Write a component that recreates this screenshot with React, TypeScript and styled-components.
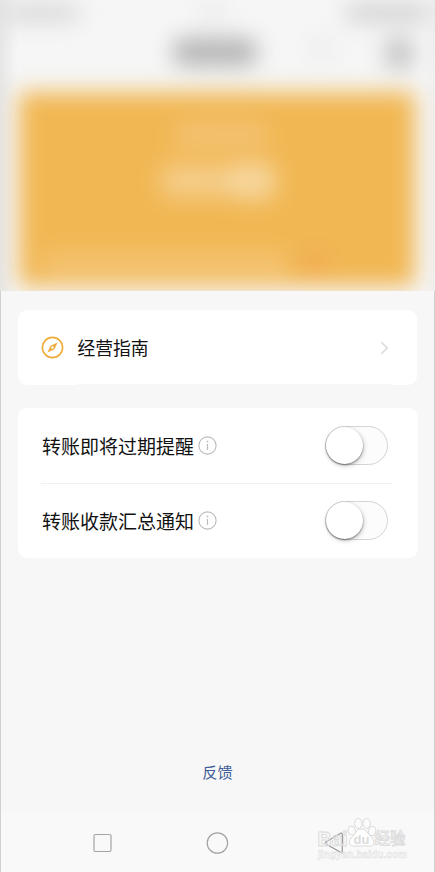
import React, { useState } from "react";
import styled, { createGlobalStyle } from "styled-components";

const GlobalStyle = createGlobalStyle`
  *, *::before, *::after { box-sizing: border-box; }
  body { margin: 0; background: #f7f7f7; }
  button { font: inherit; border: 0; padding: 0; background: none; cursor: pointer; }
`;

const Screen = styled.div`
  position: relative;
  width: 435px;
  height: 872px;
  display: flex;
  flex-direction: column;
  overflow: hidden;
  background: #f7f7f7;
  font-family: "Noto Sans CJK SC", "Noto Sans", sans-serif;
  color: #111;
`;

const Hero = styled.header`
  flex: none;
  height: 291px;
  overflow: hidden;
  background: linear-gradient(90deg, #e6e6e6 0, #f6f6f6 18px, #f6f6f6 422px, #f0f0f0 100%);
`;

const HeroContent = styled.div`
  height: 310px;
  display: flex;
  flex-direction: column;
  filter: blur(11px);
`;

const StatusRow = styled.div`
  height: 28px;
  padding: 4px 4px 0 2px;
  display: flex;
  justify-content: space-between;
`;

const TitleRow = styled.div`
  height: 64px;
  padding: 10px 22px 0 173px;
  display: flex;
  justify-content: space-between;
`;

const Smudge = styled.span<{ $w: number; $h: number; $color: string }>`
  flex: none;
  width: ${(p) => p.$w}px;
  height: ${(p) => p.$h}px;
  border-radius: 10px;
  background: ${(p) => p.$color};
`;

const BalanceCard = styled.div`
  height: 194px;
  margin: 0 20px 0 19px;
  padding: 30px 14px 0 22px;
  display: flex;
  flex-direction: column;
  align-items: center;
  background: #f1b753;
  border-radius: 4px;
`;

const Amount = styled.div`
  margin: 14px 6px 0 0;
  display: flex;
  align-items: center;
`;

const CardFooter = styled.div`
  align-self: stretch;
  margin-top: 52px;
  display: flex;
  gap: 14px;
`;

const Content = styled.main`
  flex: 1;
  display: flex;
  flex-direction: column;
  padding: 19px 17px 0;
  border: solid #d0d0d0;
  border-width: 0 1px;
`;

const GuideCard = styled.section`
  height: 75px;
  width: 399px;
  padding: 0 26px 0 23px;
  display: flex;
  align-items: center;
  background-color: #fff;
  border-radius: 9px;
  background-image: linear-gradient(#f6f6f6, #f6f6f6);
  background-size: 314px 1px;
  background-position: 60px 74px;
  background-repeat: no-repeat;
`;

const GuideLabel = styled.span`
  flex: 1;
  margin: 0 0 2px 13.5px;
  font-size: 17.8px;
  line-height: 26px;
`;

const SettingsCard = styled.section`
  width: 400px;
  height: 150px;
  margin-top: 23px;
  padding: 0 26px 0 23px;
  background: #fff;
  border-radius: 9px;
`;

const SettingRow = styled.div`
  height: 75px;
  display: flex;
  align-items: center;
  padding: 0 4px 0 1px;

  & + & {
    box-shadow: inset 0 1px #f0f0f0;
  }
`;

const SettingLabel = styled.span`
  font-size: 19px;
  line-height: 28px;
`;

const InfoIcon = styled.svg`
  margin: 0 auto 0 4px;
`;

const Toggle = styled.button<{ $on: boolean }>`
  width: 63px;
  height: 39px;
  display: flex;
  align-items: center;
  justify-content: ${(p) => (p.$on ? "flex-end" : "flex-start")};
  border: 1px solid #d1d5d4;
  border-radius: 20px;
  background: ${(p) => (p.$on ? "#f1b753" : "#fcfcfc")};
`;

const Knob = styled.span`
  width: 37px;
  height: 37px;
  border-radius: 50%;
  background: #fff;
  box-shadow: 0 1px 2px rgba(0, 0, 0, 0.45), 1px 2px 5px rgba(0, 0, 0, 0.18);
`;

const Feedback = styled.a`
  margin: auto auto 30px;
  color: #405d99;
  font-size: 15.2px;
  line-height: 24px;
`;

const NavBar = styled.nav`
  flex: none;
  height: 59px;
  padding: 0 90px 0 91px;
  display: grid;
  grid-template-columns: 114px 1fr auto;
  align-items: center;
  background: #f9f9f9;
  border: solid #d0d0d0;
  border-width: 0 1px;

  svg { display: block; }
`;

const Watermark = styled.div`
  position: absolute;
  left: 316px;
  top: 816px;
  width: 92px;
  height: 48px;
  pointer-events: none;
`;

function SettingItem({ label }: { label: string }) {
  const [on, setOn] = useState(false);
  return (
    <SettingRow>
      <SettingLabel>{label}</SettingLabel>
      <InfoIcon width="19" height="19" viewBox="0 0 19 19" fill="none" stroke="#bbb">
        <circle cx="9.5" cy="9.5" r="8.6" strokeWidth="1.1" />
        <path d="M9.5 8v6" strokeWidth="1.2" />
        <path d="M9.5 4.7v1.6" strokeWidth="1.5" />
      </InfoIcon>
      <Toggle $on={on} role="switch" aria-checked={on} aria-label={label} onClick={() => setOn(!on)}>
        <Knob />
      </Toggle>
    </SettingRow>
  );
}

export default function App() {
  return (
    <>
      <GlobalStyle />
      <Screen>
        <Hero>
          <HeroContent>
            <StatusRow>
              <Smudge $w={78} $h={18} $color="#d8d8d8" />
              <Smudge $w={24} $h={16} $color="#e7e7e7" />
              <Smudge $w={86} $h={18} $color="#d1d1d1" />
            </StatusRow>
            <TitleRow>
              <Smudge $w={84} $h={28} $color="#b5b5b5" />
              <Smudge $w={20} $h={22} $color="#e9e9e9" />
              <Smudge $w={28} $h={31} $color="#c2c2c2" />
            </TitleRow>
            <BalanceCard>
              <Smudge $w={94} $h={26} $color="#f3c273" />
              <Amount>
                <Smudge $w={66} $h={34} $color="#f5cc88" />
                <Smudge $w={50} $h={38} $color="#f6d59b" />
              </Amount>
              <CardFooter>
                <Smudge $w={248} $h={24} $color="#f4c372" />
                <Smudge $w={24} $h={22} $color="#f2a952" />
              </CardFooter>
            </BalanceCard>
          </HeroContent>
        </Hero>
        <Content>
          <GuideCard>
            <svg width="23" height="23" viewBox="0 0 23 23" fill="none">
              <circle cx="11.5" cy="11.5" r="10.1" stroke="#efad3d" strokeWidth="1.6" />
              <path
                d="M16.5 6.5 13.6 13.3 6.5 16.5 9.4 9.7ZM11.5 10.2a1.3 1.3 0 1 0 0 2.6 1.3 1.3 0 0 0 0-2.6Z"
                fill="#efad3d"
                fillRule="evenodd"
              />
            </svg>
            <GuideLabel>经营指南</GuideLabel>
            <svg width="12" height="14" viewBox="0 0 12 14" fill="none">
              <path d="m2.3 1.2 6 5.8-6 5.8" stroke="#d9d9d9" strokeWidth="1.5" />
            </svg>
          </GuideCard>
          <SettingsCard>
            <SettingItem label="转账即将过期提醒" />
            <SettingItem label="转账收款汇总通知" />
          </SettingsCard>
          <Feedback>反馈</Feedback>
        </Content>
        <NavBar>
          <svg width="20" height="20" viewBox="0 0 20 20" fill="none" stroke="#a4a4a4">
            <rect x="2" y="1.5" width="17" height="17" rx="1.5" strokeWidth="1.2" />
          </svg>
          <svg width="24" height="24" viewBox="0 0 24 24" fill="none" stroke="#a4a4a4">
            <circle cx="11.4" cy="12" r="10.2" strokeWidth="1.2" />
          </svg>
          <svg width="20" height="22" viewBox="0 0 20 22" fill="none" stroke="#959595">
            <path d="M2 10.1 16.5 1.3q1.8-.8 1.8 1v17q0 1.8-1.8 1L2 11.9q-1.4-.9 0-1.8Z" strokeWidth="1.2" />
          </svg>
        </NavBar>
        <Watermark>
          <svg width="92" height="48" viewBox="0 0 92 48" fill="#fff" fillOpacity=".35" stroke="#dadada" strokeWidth="1">
            <ellipse cx="35.8" cy="14.5" rx="3.6" ry="4.6" transform="rotate(-18 35.8 14.5)" />
            <ellipse cx="42.3" cy="7.5" rx="3.7" ry="5" />
            <ellipse cx="50.7" cy="7.5" rx="3.7" ry="5" />
            <ellipse cx="56.2" cy="15" rx="3.6" ry="4.6" transform="rotate(14 56.2 15)" />
            <path
              d="M45.5 13c-5 0-6.5 5-9 7.5-4.500 4.200-3.500 9.500.5 9.500h17.500c4 0 5-5.300.5-9.500-3-2.500-4.500-7.500-9.500-7.500Z"
              fillOpacity=".8"
            />
            <g fontFamily="Liberation Sans, sans-serif" fontWeight="700">
              <text x="1.5" y="29.5" fontSize="21" textLength="30" lengthAdjust="spacingAndGlyphs">Bai</text>
              <text x="37.5" y="27.5" fontSize="13" textLength="16" stroke="none" fill="#dcdcdc" fillOpacity="1">du</text>
              <text x="2" y="42" fontSize="10" textLength="89" strokeWidth=".5" stroke="#e0e0e0">jingyan.baidu.com</text>
            </g>
            <text x="58.5" y="28" fontSize="15.5" textLength="31" fontFamily="Noto Sans CJK SC, sans-serif" fontWeight="500" strokeWidth=".8">经验</text>
          </svg>
        </Watermark>
      </Screen>
    </>
  );
}
